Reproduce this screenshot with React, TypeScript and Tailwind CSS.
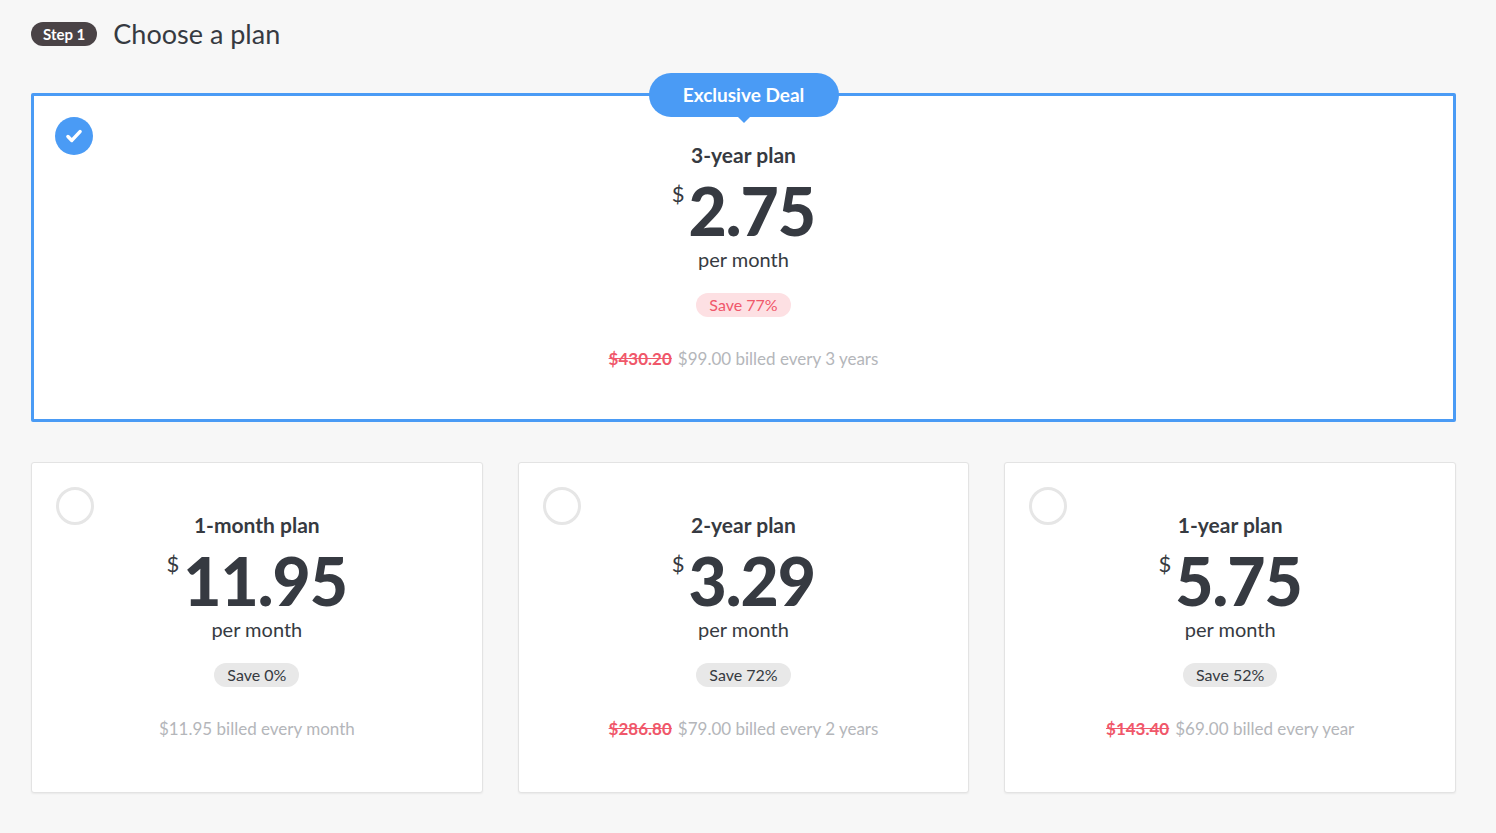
import React from "react";

const F = { fontFamily: "Lato, 'Noto Sans', sans-serif" };

function Check() {
  return (
    <div className="w-[38px] h-[38px] rounded-full bg-[#4a9bf5] flex items-center justify-center">
      <svg width="22" height="22" viewBox="0 0 20 20"><path d="M4.5 10.5l3.5 3.5 7.5-8" stroke="white" strokeWidth="3.2" fill="none" strokeLinecap="round" strokeLinejoin="round" /></svg>
    </div>
  );
}

function Price({ v }: { v: string }) {
  return (
    <div className="flex items-start justify-center text-[#363a41] mt-[10px]">
      <span className="text-[22px] leading-none mt-[4px] mr-[4px]">$</span>
      <span className="text-[66px] font-black leading-[64px] tracking-[-1px]">{v}</span>
    </div>
  );
}

function Plan({ title, price, save, old, billed, selected }: { title: string; price: string; save: string; old?: string; billed: string; selected?: boolean }) {
  return (
    <div className="flex flex-col items-center">
      <div className="text-[21px] font-bold text-[#363a41] leading-[28px]">{title}</div>
      <Price v={price} />
      <div className="text-[20px] text-[#363a41] leading-[24px] mt-[4px]">{"per month"}</div>
      <div className={`mt-[22px] rounded-full px-[13px] h-[24px] flex items-center text-[16px] ${selected ? "bg-[#fde0e3] text-[#f0576a]" : "bg-[#e8e8e8] text-[#363a41]"}`}>{save}</div>
      <div className="mt-[31px] text-[17px] text-[#b4b6ba] leading-[22px]">
        {old && <span className="line-through text-[#f0576a] font-bold mr-[6px]">{old}</span>}
        {billed}
      </div>
    </div>
  );
}

function Small(p: { title: string; price: string; save: string; old?: string; billed: string }) {
  return (
    <div className="relative bg-white border border-[#e3e3e3] rounded-[3px] h-[331px] pt-[48px] shadow-[0_1px_2px_rgba(0,0,0,0.06)]">
      <div className="absolute left-[24px] top-[24px] w-[38px] h-[38px] rounded-full border-[3px] border-[#e6e6e6]" />
      <Plan {...p} />
    </div>
  );
}

export default function App() {
  return (
    <div style={F} className="min-h-[833px] bg-[#f7f7f7] pl-[31px] pr-[40px] pt-[20px] pb-[40px]">
      <div className="flex items-center gap-[16px] h-[28px]">
        <span className="bg-[#4a4346] text-white text-[15px] font-bold rounded-full px-[12px] h-[24px] flex items-center">Step 1</span>
        <span className="text-[27px] text-[#363a41]">Choose a plan</span>
      </div>
      <div className="relative mt-[45px] bg-white border-[3px] border-[#4a9bf5] rounded-[2px] h-[329px] pt-[45px]">
        <div className="absolute left-1/2 -translate-x-1/2 -top-[23px] bg-[#4a9bf5] text-white text-[19px] font-bold rounded-full w-[190px] h-[44px] flex items-center justify-center">
          Exclusive Deal
          <div className="absolute left-1/2 -translate-x-1/2 bottom-[-6px] w-0 h-0 border-l-[7px] border-r-[7px] border-t-[7px] border-l-transparent border-r-transparent border-t-[#4a9bf5]" />
        </div>
        <div className="absolute left-[21px] top-[21px]"><Check /></div>
        <Plan title="3-year plan" price="2.75" save="Save 77%" old="$430.20" billed="$99.00 billed every 3 years" selected />
      </div>
      <div className="grid grid-cols-3 gap-[35px] mt-[40px]">
        <Small title="1-month plan" price="11.95" save="Save 0%" billed="$11.95 billed every month" />
        <Small title="2-year plan" price="3.29" save="Save 72%" old="$286.80" billed="$79.00 billed every 2 years" />
        <Small title="1-year plan" price="5.75" save="Save 52%" old="$143.40" billed="$69.00 billed every year" />
      </div>
    </div>
  );
}
